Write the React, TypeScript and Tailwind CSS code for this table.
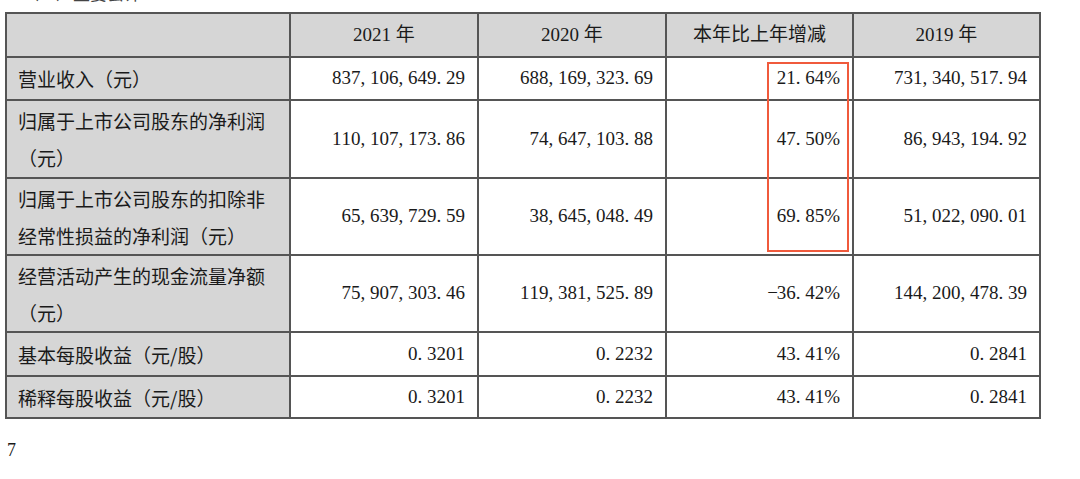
import React from "react";

type Row = {
  label: string[];
  values: string[];
  h: string;
};

const rows: Row[] = [
  {
    label: ["营业收入（元）"],
    values: ["837,106,649.29", "688,169,323.69", "21.64%", "731,340,517.94"],
    h: "h-[43px]",
  },
  {
    label: ["归属于上市公司股东的净利润", "（元）"],
    values: ["110,107,173.86", "74,647,103.88", "47.50%", "86,943,194.92"],
    h: "h-[78px]",
  },
  {
    label: ["归属于上市公司股东的扣除非", "经常性损益的净利润（元）"],
    values: ["65,639,729.59", "38,645,048.49", "69.85%", "51,022,090.01"],
    h: "h-[77px]",
  },
  {
    label: ["经营活动产生的现金流量净额", "（元）"],
    values: ["75,907,303.46", "119,381,525.89", "-36.42%", "144,200,478.39"],
    h: "h-[77px]",
  },
  {
    label: ["基本每股收益（元/股）"],
    values: ["0.3201", "0.2232", "43.41%", "0.2841"],
    h: "h-[44px]",
  },
  {
    label: ["稀释每股收益（元/股）"],
    values: ["0.3201", "0.2232", "43.41%", "0.2841"],
    h: "h-[42px]",
  },
];

const headers = ["2021 年", "2020 年", "本年比上年增减", "2019 年"];

// SimSun-like half-width digits: every ascii char gets a 0.5em box
const Num: React.FC<{ text: string }> = ({ text }) => (
  <span className="whitespace-nowrap">
    {text.split("").map((c, i) =>
      c === "%" ? (
        <span key={i} className="inline-block">
          {c}
        </span>
      ) : (
        <span key={i} className="inline-block w-[0.5em] text-left">
          {c === "-" ? "−" : c}
        </span>
      )
    )}
  </span>
);

const App: React.FC = () => {
  return (
    <div
      className="relative w-[1080px] h-[479px] overflow-hidden bg-white text-[#1a1a1a]"
      style={{ fontFamily: '"Liberation Serif", "Noto Sans CJK SC", serif' }}
    >
      <div className="h-[12px] overflow-hidden pl-[22px] text-[17px] leading-none">
        <div className="-mt-[16px] font-['Noto_Sans_CJK_SC',sans-serif] text-[#444]">
          （一）主要会计
        </div>
      </div>

      <table className="ml-[5px] table-fixed border-collapse text-[19px]">
        <colgroup>
          <col className="w-[284px]" />
          <col className="w-[188px]" />
          <col className="w-[188px]" />
          <col className="w-[187px]" />
          <col className="w-[187px]" />
        </colgroup>
        <thead>
          <tr className="h-[44px] bg-[#d6d6d6]">
            <th className="border-2 border-[#555]"></th>
            {headers.map((h) => (
              <th
                key={h}
                className="border-2 border-[#555] text-center font-normal font-['Liberation_Serif','Noto_Sans_CJK_SC',serif]"
              >
                {h}
              </th>
            ))}
          </tr>
        </thead>
        <tbody>
          {rows.map((r) => (
            <tr key={r.label[0]} className={r.h}>
              <td className="border-2 border-[#555] bg-[#d6d6d6] pl-[11px] text-left align-middle font-['Noto_Sans_CJK_SC',sans-serif] leading-[37px]">
                {r.label.map((l) => (
                  <div key={l}>{l}</div>
                ))}
              </td>
              {r.values.map((v, i) => (
                <td
                  key={i}
                  className="border-2 border-[#555] pr-[12px] text-right align-middle"
                >
                  <Num text={v} />
                </td>
              ))}
            </tr>
          ))}
        </tbody>
      </table>

      <div className="absolute left-[767px] top-[62px] h-[190px] w-[82px] border-2 border-[#f05a3c]" />

      <div className="mt-[22px] pl-[7px] text-[18px] leading-none">7</div>
    </div>
  );
};

export default App;
